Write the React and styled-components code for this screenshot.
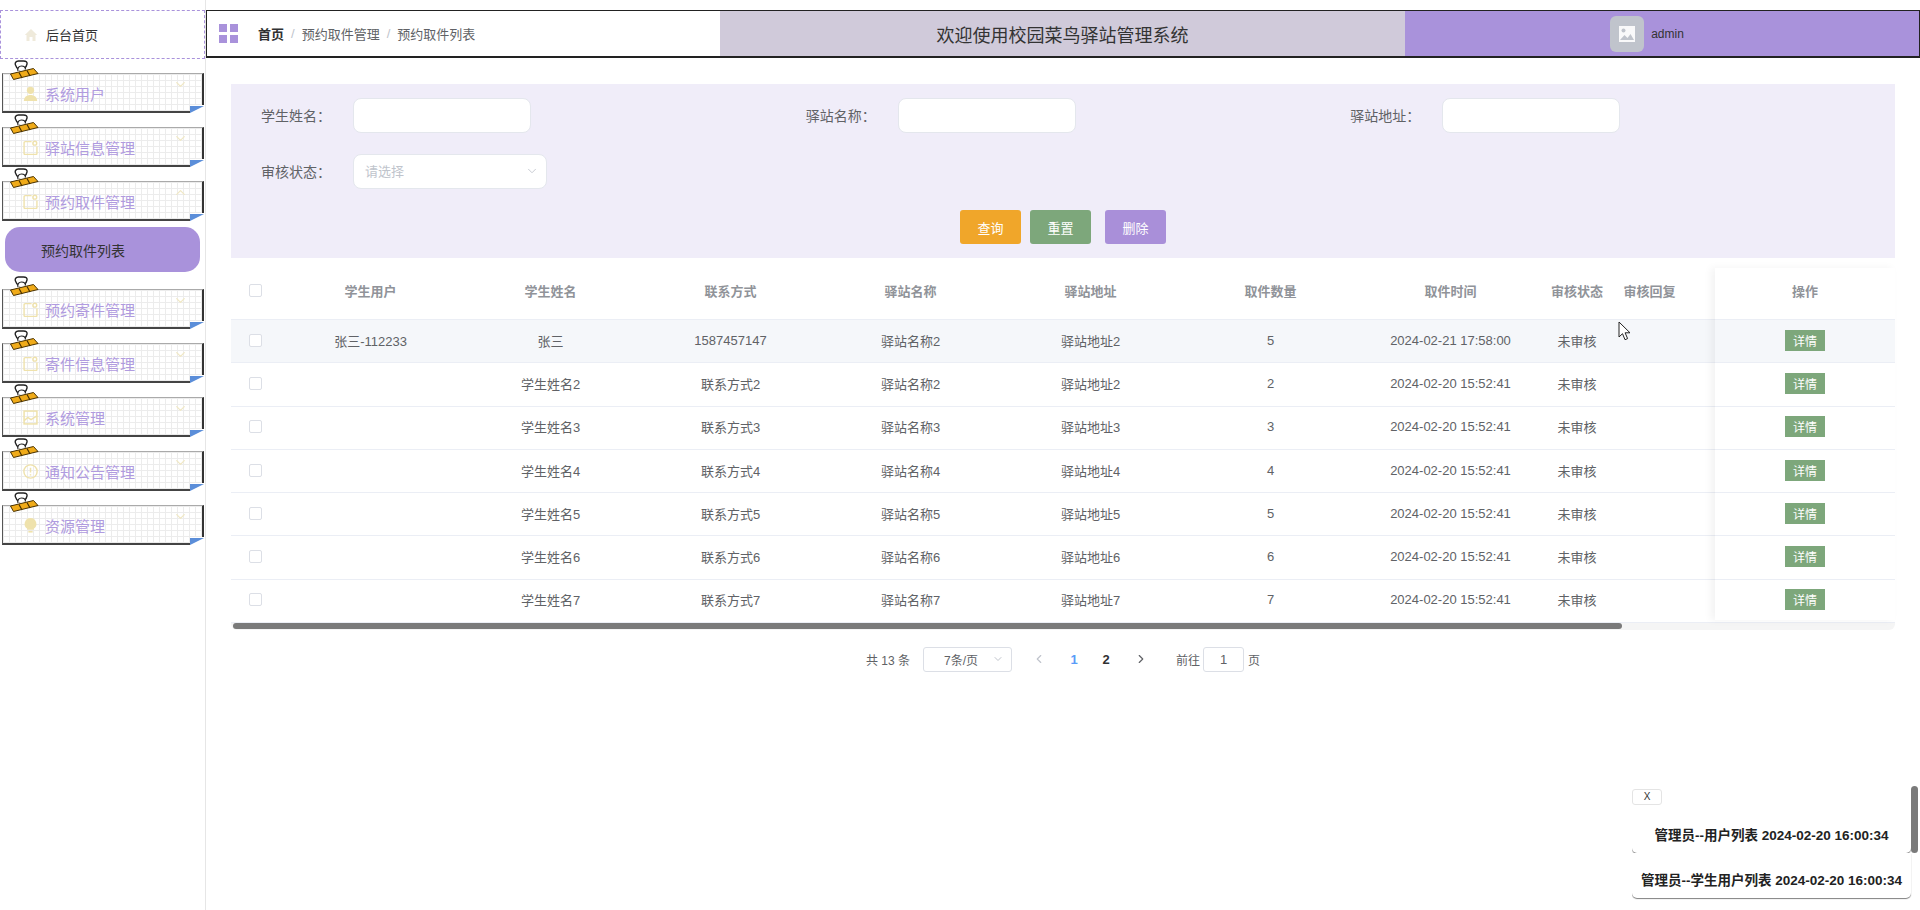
import React from 'react';
import styled, { createGlobalStyle } from 'styled-components';
import { ChevronDown, ChevronUp, ChevronLeft, ChevronRight } from 'lucide-react';

const GlobalStyle = createGlobalStyle`
  html, body {
    margin: 0;
    padding: 0;
    height: 100%;
    background: #fff;
    overflow: hidden;
    font-family: "Liberation Sans", "Noto Sans CJK SC", sans-serif;
  }
  * { box-sizing: border-box; }
`;

const Page = styled.div`
  position: relative;
  display: flex;
  width: 1920px;
  height: 910px;
  overflow: hidden;
`;

const Sidebar = styled.aside`
  width: 206px;
  flex: none;
  padding-top: 10px;
  border-right: 1px solid #e6e6e6;
`;

const HomeLink = styled.div`
  height: 49px;
  display: flex;
  align-items: center;
  gap: 8px;
  padding-left: 23px;
  border: 1px dashed #a992db;
  font-size: 13px;
  color: #333;
`;

const Menu = styled.div`
  display: flex;
  flex-direction: column;
  gap: 14px;
  margin-top: 14px;
`;

const MenuItem = styled.div`
  position: relative;
  height: 40px;
  margin: 0 1px 0 2px;
  padding: 2px 0 0 20px;
  display: flex;
  align-items: center;
  gap: 7px;
  font-size: 15px;
  color: #b09bdf;
  background-color: #fff;
  background-image:
    linear-gradient(#ececec 1px, transparent 1px),
    linear-gradient(90deg, #ececec 1px, transparent 1px);
  background-size: 6px 6px;
  border-top: 1px solid #aaa;
  border-left: 1px solid #555;
  border-right: 2px solid #333;
  border-bottom: 2px solid #444;

  &::before {
    content: '';
    position: absolute;
    right: -2px;
    bottom: -2px;
    width: 14px;
    height: 8px;
    background: #fff;
  }

  &::after {
    content: '';
    position: absolute;
    right: -2px;
    bottom: -2px;
    width: 14px;
    height: 7px;
    background: #5b8ed9;
    clip-path: polygon(0 0, 100% 0, 0 100%);
  }
`;

const Clip = styled.svg`
  position: absolute;
  left: 7px;
  top: -14px;
`;

const Arrow = styled.span`
  position: absolute;
  right: 14px;
  top: 3px;
  display: flex;
  color: #f0e8c4;
`;

const SubItem = styled.div`
  height: 45px;
  width: 195px;
  margin: 6px 0 3px 5px;
  padding-left: 36px;
  display: flex;
  align-items: center;
  font-size: 14px;
  color: #333;
  background: #a992db;
  border-radius: 15px;
`;

const Main = styled.main`
  flex: 1;
  min-width: 0;
  padding-top: 10px;
`;

const TopNav = styled.header`
  height: 48px;
  display: flex;
  border: 1px solid #222;
  border-bottom-width: 2px;
`;

const Crumbs = styled.div`
  width: 513px;
  flex: none;
  display: flex;
  align-items: center;
  padding-left: 12px;
  font-size: 13px;
  color: #606266;
`;

const GridIcon = styled.span`
  display: grid;
  grid-template-columns: 8px 8px;
  grid-auto-rows: 8px;
  gap: 3px;
  margin-right: 20px;

  i {
    background: #a992db;
  }
`;

const CrumbHome = styled.b`
  color: #303133;
`;

const CrumbSep = styled.span`
  margin: 0 7px;
  color: #c0c4cc;
`;

const TitleBar = styled.div`
  width: 685px;
  flex: none;
  display: flex;
  align-items: center;
  justify-content: center;
  font-size: 18px;
  color: #333;
  background: #d0cada;
`;

const UserBar = styled.div`
  flex: 1;
  display: flex;
  align-items: center;
  justify-content: center;
  gap: 7px;
  padding-right: 30px;
  font-size: 12px;
  color: #333;
  background: #a992db;
`;

const Avatar = styled.span`
  width: 34px;
  height: 36px;
  display: flex;
  align-items: center;
  justify-content: center;
  background: #c0c4cc;
  border-radius: 6px;
`;

const Content = styled.div`
  padding: 26px 25px 0;
`;

const SearchPanel = styled.section`
  height: 174px;
  padding: 14px 0 0 30px;
  background: #f0edf9;
`;

const FormRow = styled.div`
  display: flex;
  margin-bottom: 21px;
`;

const FormItem = styled.label`
  width: 545.5px;
  display: flex;
  align-items: center;
  font-size: 14px;
  color: #606266;
`;

const FormLabel = styled.span`
  width: 92px;
  flex: none;
  padding-bottom: 2px;
`;

const TextInput = styled.input`
  width: 178px;
  height: 35px;
  border: 1px solid #e4e7ed;
  border-radius: 8px;
  background: #fff;
  outline: none;
`;

const SelectBox = styled.div`
  width: 194px;
  height: 35px;
  display: flex;
  align-items: center;
  justify-content: space-between;
  padding: 0 7px 2px 11px;
  border: 1px solid #e4e7ed;
  border-radius: 8px;
  background: #fff;
  font-size: 13px;
  color: #c0c4cc;
`;

const Actions = styled.div`
  display: flex;
  padding-left: 699px;
`;

const ActionButton = styled.button`
  width: 61px;
  height: 34px;
  margin-right: ${(p) => p.$gap}px;
  padding: 0;
  border: none;
  border-radius: 3px;
  color: #fff;
  font-family: inherit;
  font-size: 13px;
  background: ${(p) => p.$bg};
`;

const TableWrap = styled.section`
  position: relative;
  font-size: 13px;
  color: #606266;

  &::after {
    content: '';
    position: absolute;
    left: 1484px;
    top: 10px;
    width: 180px;
    bottom: 10px;
    box-shadow: -4px 0 8px rgba(0, 0, 0, 0.05);
    pointer-events: none;
  }
`;

const Row = styled.div`
  display: grid;
  grid-template-columns: 49.5px repeat(7, 180px) 73px 72px 29.5px 180px;
  align-items: center;
  height: ${(p) => (p.$head ? '62px' : '43.25px')};
  padding: ${(p) => (p.$head ? '4px 0 0' : '0 0 1.5px')};
  border-bottom: 1px solid #ebeef5;
  background: ${(p) => (p.$hover ? '#f5f7fa' : '#fff')};
  color: ${(p) => (p.$head ? '#909399' : 'inherit')};
  font-weight: ${(p) => (p.$head ? 'bold' : 'normal')};
`;

const Cell = styled.div`
  text-align: center;
  white-space: nowrap;
`;

const Check = styled.span`
  display: block;
  width: 13px;
  height: 13px;
  margin: 0 auto;
  background: #fff;
  border: 1px solid #dcdfe6;
  border-radius: 2px;
`;

const DetailButton = styled.button`
  display: block;
  width: 40px;
  height: 21px;
  margin: 0 auto;
  padding: 0;
  border: none;
  color: #fff;
  font-family: inherit;
  font-size: 12px;
  background: #7da77b;
`;

const ScrollTrack = styled.div`
  height: 7px;
  background: #f5f5f5;
  border-radius: 0 0 6px 6px;
`;

const ScrollThumb = styled.div`
  width: 1389px;
  height: 6px;
  margin-left: 2px;
  background: #7a7a7a;
  border-radius: 3px;
`;

const Pager = styled.nav`
  display: flex;
  align-items: center;
  height: 25px;
  margin-top: 17px;
  padding-left: 635px;
  font-size: 12px;
  color: #606266;
`;

const PageSize = styled.div`
  width: 89px;
  height: 25px;
  margin: 0 20px 0 13px;
  display: flex;
  align-items: center;
  justify-content: space-between;
  padding: 0 7px 0 20px;
  border: 1px solid #dcdfe6;
  border-radius: 3px;
`;

const PagePrev = styled.span`
  width: 14px;
  flex: none;
  display: flex;
  margin-right: 12px;
  color: #c0c4cc;
`;

const PageNext = styled.span`
  width: 14px;
  flex: none;
  display: flex;
  margin: 0 28px 0 12px;
  color: #606266;
`;

const PageNum = styled.span`
  width: 32px;
  text-align: center;
  font-size: 13px;
  font-weight: bold;
  color: ${(p) => (p.$on ? '#5a9cf8' : '#303133')};
`;

const PageInput = styled.span`
  width: 41px;
  height: 25px;
  margin: 0 4px 0 3px;
  display: flex;
  align-items: center;
  justify-content: center;
  font-size: 13px;
  border: 1px solid #dcdfe6;
  border-radius: 3px;
`;

const Notice = styled.aside`
  position: absolute;
  left: 1632px;
  top: 786px;
  width: 286px;
  height: 124px;
  padding: 3px 7px 0 0;
  overflow: hidden;
`;

const NoticeThumb = styled.div`
  position: absolute;
  right: 0;
  top: 0;
  width: 7px;
  height: 67px;
  background: #7a7a7a;
  border-radius: 4px;
`;

const CloseButton = styled.button`
  display: block;
  width: 30px;
  height: 16px;
  padding: 0;
  border: 1px solid #e4e4e4;
  border-radius: 3px;
  background: #fff;
  color: #333;
  font-family: inherit;
  font-size: 10px;
  line-height: 14px;
`;

const NoticeCard = styled.div`
  height: 45px;
  display: flex;
  align-items: center;
  justify-content: center;
  padding-top: 6px;
  margin-top: ${(p) => (p.$first ? '3px' : '0')};
  font-size: 13.5px;
  font-weight: bold;
  color: #222;
  background: #fff;
  border-radius: 0 0 5px 5px;
  box-shadow: 0 1px 1px #808080;
  white-space: nowrap;
`;

const Cursor = styled.svg`
  position: absolute;
  left: 1618px;
  top: 321px;
`;

const ICON = '#efe2ac';

const DocIcon = () => (
  <svg width="15" height="15" viewBox="0 0 14 14" fill="none" stroke={ICON} strokeWidth="1.3">
    <path d="M8 1.500H2a1 1 0 0 0-1 1v10a1 1 0 0 0 1 1h10a1 1 0 0 0 1-1V6" />
    <circle cx="11" cy="3" r="1.800" />
  </svg>
);

const UserIcon = () => (
  <svg width="15" height="15" viewBox="0 0 14 14" fill={ICON}>
    <circle cx="7" cy="4" r="3.400" />
    <path d="M0.800 14c0-3.600 2.600-5.600 6.200-5.600s6.200 2 6.200 5.600z" />
  </svg>
);

const PicIcon = () => (
  <svg width="15" height="15" viewBox="0 0 14 14" fill="none" stroke={ICON} strokeWidth="1.4">
    <rect x="1" y="1" width="12" height="12" />
    <path d="M1 10l3.500-3 3 2 5.500-3.500" />
  </svg>
);

const InfoIcon = () => (
  <svg width="15" height="15" viewBox="0 0 14 14" fill="none" stroke={ICON} strokeWidth="1.3">
    <circle cx="7" cy="7" r="6.200" />
    <path d="M7 3.500v4.500M7 9.500v1.200" strokeWidth="1.400" />
  </svg>
);

const BulbIcon = () => (
  <svg width="15" height="15" viewBox="0 0 14 14" fill={ICON}>
    <path d="M7 0a5.500 5.500 0 0 0-3 10.100V11h6v-.9A5.500 5.500 0 0 0 7 0z" />
    <rect x="5" y="12" width="4" height="1.600" />
  </svg>
);

const HomeIcon = () => (
  <svg width="14" height="14" viewBox="0 0 14 14" fill="#efeadb">
    <path d="M7 1L0.800 7H2.500v6h3V9h3v4h3V7h1.700z" />
  </svg>
);

const ClipIcon = () => (
  <Clip width="29" height="20" viewBox="0 0 29 20">
    <path d="M10 11C5 7 3 1.500 8.500 1h5c5.500 0 4 5 0 8.500" fill="#fff" stroke="#222" strokeWidth="1.400" />
    <path d="M8 11c-1-3 1-5 3.500-5s4 1.500 4 3.500" fill="#fff" stroke="#222" strokeWidth="1.200" />
    <path d="M0.500 14L23.500 8.500L28 13.500L3.500 19.500z" fill="#f0ab19" stroke="#4a3200" strokeWidth="1" />
    <path d="M9 12.500l3 5.500M17 10.500l3 5.500" stroke="#4a3200" strokeWidth="1.200" />
  </Clip>
);

const menus = [
  { label: '系统用户', icon: <UserIcon /> },
  { label: '驿站信息管理', icon: <DocIcon /> },
  { label: '预约取件管理', icon: <DocIcon />, open: true },
  { label: '预约寄件管理', icon: <DocIcon /> },
  { label: '寄件信息管理', icon: <DocIcon /> },
  { label: '系统管理', icon: <PicIcon /> },
  { label: '通知公告管理', icon: <InfoIcon /> },
  { label: '资源管理', icon: <BulbIcon /> },
];

const headers = ['学生用户', '学生姓名', '联系方式', '驿站名称', '驿站地址', '取件数量', '取件时间', '审核状态', '审核回复'];

const rows = [
  { user: '张三-112233', name: '张三', phone: '1587457147', station: '驿站名称2', addr: '驿站地址2', count: 5, time: '2024-02-21 17:58:00' },
  ...[2, 3, 4, 5, 6, 7].map((n) => ({
    user: '',
    name: `学生姓名${n}`,
    phone: `联系方式${n}`,
    station: `驿站名称${n}`,
    addr: `驿站地址${n}`,
    count: n,
    time: '2024-02-20 15:52:41',
  })),
];

export default function App() {
  return (
    <Page>
      <GlobalStyle />
      <Sidebar>
        <HomeLink>
          <HomeIcon />
          后台首页
        </HomeLink>
        <Menu>
          {menus.map((m) => (
            <div key={m.label}>
              <MenuItem>
                <ClipIcon />
                {m.icon}
                {m.label}
                <Arrow>{m.open ? <ChevronUp size={15} /> : <ChevronDown size={15} />}</Arrow>
              </MenuItem>
              {m.open && <SubItem>预约取件列表</SubItem>}
            </div>
          ))}
        </Menu>
      </Sidebar>

      <Main>
        <TopNav>
          <Crumbs>
            <GridIcon>
              <i /><i /><i /><i />
            </GridIcon>
            <CrumbHome>首页</CrumbHome>
            <CrumbSep>/</CrumbSep>
            预约取件管理
            <CrumbSep>/</CrumbSep>
            预约取件列表
          </Crumbs>
          <TitleBar>欢迎使用校园菜鸟驿站管理系统</TitleBar>
          <UserBar>
            <Avatar>
              <svg width="18" height="18" viewBox="0 0 18 18" fill="#fff">
                <path d="M1 1h16v16H1z" fillOpacity="0.9" />
                <circle cx="5.500" cy="5.500" r="2" fill="#c0c4cc" />
                <path d="M2 15l4.500-5 3 3 3-4 3.500 6z" fill="#c0c4cc" />
              </svg>
            </Avatar>
            admin
          </UserBar>
        </TopNav>

        <Content>
          <SearchPanel>
            <FormRow>
              <FormItem><FormLabel>学生姓名：</FormLabel><TextInput /></FormItem>
              <FormItem><FormLabel>驿站名称：</FormLabel><TextInput /></FormItem>
              <FormItem><FormLabel>驿站地址：</FormLabel><TextInput /></FormItem>
            </FormRow>
            <FormRow>
              <FormItem>
                <FormLabel>审核状态：</FormLabel>
                <SelectBox>
                  请选择
                  <ChevronDown size={14} strokeWidth={1.5} />
                </SelectBox>
              </FormItem>
            </FormRow>
            <Actions>
              <ActionButton $bg="#f0a62a" $gap={9}>查询</ActionButton>
              <ActionButton $bg="#7da77b" $gap={14}>重置</ActionButton>
              <ActionButton $bg="#a98fd9" $gap={0}>删除</ActionButton>
            </Actions>
          </SearchPanel>

          <TableWrap>
            <Row $head>
              <Cell><Check /></Cell>
              {headers.map((h) => <Cell key={h}>{h}</Cell>)}
              <Cell />
              <Cell>操作</Cell>
            </Row>
            {rows.map((r, i) => (
              <Row key={r.name} $hover={i === 0}>
                <Cell><Check /></Cell>
                <Cell>{r.user}</Cell>
                <Cell>{r.name}</Cell>
                <Cell>{r.phone}</Cell>
                <Cell>{r.station}</Cell>
                <Cell>{r.addr}</Cell>
                <Cell>{r.count}</Cell>
                <Cell>{r.time}</Cell>
                <Cell>未审核</Cell>
                <Cell />
                <Cell />
                <Cell><DetailButton>详情</DetailButton></Cell>
              </Row>
            ))}
            <ScrollTrack>
              <ScrollThumb />
            </ScrollTrack>
          </TableWrap>

          <Pager>
            共 13 条
            <PageSize>
              7条/页
              <ChevronDown size={12} color="#c0c4cc" />
            </PageSize>
            <PagePrev><ChevronLeft size={14} /></PagePrev>
            <PageNum $on>1</PageNum>
            <PageNum>2</PageNum>
            <PageNext><ChevronRight size={14} /></PageNext>
            前往
            <PageInput>1</PageInput>
            页
          </Pager>
        </Content>
      </Main>

      <Notice>
        <NoticeThumb />
        <CloseButton>X</CloseButton>
        <NoticeCard $first>管理员--用户列表 2024-02-20 16:00:34</NoticeCard>
        <NoticeCard>管理员--学生用户列表 2024-02-20 16:00:34</NoticeCard>
      </Notice>

      <Cursor width="14" height="20" viewBox="0 0 14 20">
        <path d="M1 1v15l3.500-3.300 2.500 6 2.600-1.100-2.500-5.800H12z" fill="#fff" stroke="#222" strokeWidth="1" />
      </Cursor>
    </Page>
  );
}
